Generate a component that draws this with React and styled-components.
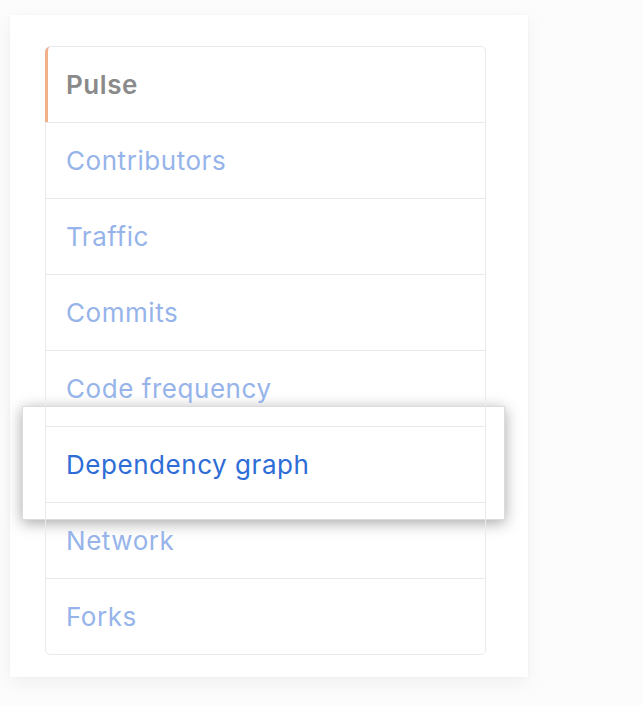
import React from "react";
import styled, { createGlobalStyle } from "styled-components";

const Global = createGlobalStyle`
  html, body { margin: 0; padding: 0; background: #fcfcfc; }
  body { font-family: Inter, "Liberation Sans", Arial, sans-serif; }
`;

const Page = styled.div`
  padding: 15px 0 0 10px;
  width: 642px;
  height: 706px;
  box-sizing: border-box;
`;

const Card = styled.div`
  position: relative;
  z-index: 0;
  width: 518px;
  height: 662px;
  box-sizing: border-box;
  background: #fff;
  padding: 31px 42px 0 35px;
  box-shadow: 0 6px 18px rgba(0, 0, 0, 0.05), 0 0 3px rgba(0, 0, 0, 0.03);
`;

const List = styled.nav`
  border: 1px solid #e8eaed;
  border-radius: 5px;
  display: flex;
  flex-direction: column;
`;

const Row = styled.div`
  position: relative;
  height: 75px;
  display: flex;
  align-items: center;
  padding-left: 20px;
  font-size: 26px;
  letter-spacing: 0.55px;
  color: ${(p) => (p.$active ? "#2e6dd5" : "#96b4ea")};
  border-top: 1px solid #e8eaed;
  &:first-child {
    border-top: none;
  }
  ${(p) =>
    p.$selected &&
    `
    margin-left: -1px;
    padding-left: 18px;
    border-left: 3px solid #efb08a;
    border-top-left-radius: 5px;
    color: #8a8a8a;
    font-weight: 600;
  `}
`;

const Spotlight = styled.span`
  position: absolute;
  z-index: -1;
  top: -21px;
  left: -24px;
  right: -20px;
  bottom: -18px;
  background: #fff;
  border: 1px solid #dcdcdc;
  box-shadow: 0 3px 14px rgba(0, 0, 0, 0.35);
`;

const items = [
  "Pulse",
  "Contributors",
  "Traffic",
  "Commits",
  "Code frequency",
  "Dependency graph",
  "Network",
  "Forks",
];

export default function App() {
  return (
    <Page>
      <Global />
      <Card>
        <List>
          {items.map((t, i) => (
            <Row key={t} $selected={i === 0} $active={t === "Dependency graph"}>
              {t === "Dependency graph" && <Spotlight />}
              {t}
            </Row>
          ))}
        </List>
      </Card>
    </Page>
  );
}
